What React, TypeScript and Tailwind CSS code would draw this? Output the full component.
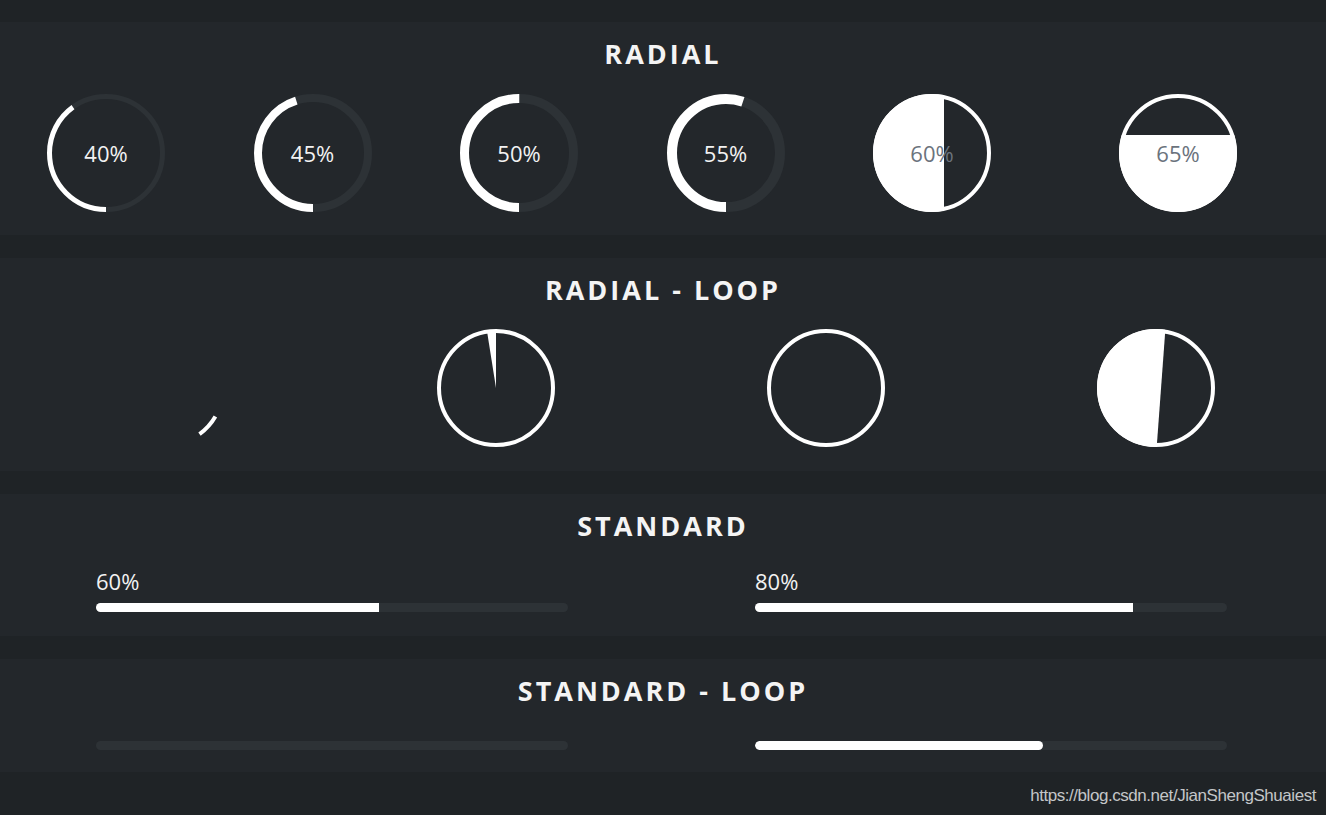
import React from "react";

function Arc({ p, sw, label }: { p: number; sw: number; label: string }) {
  const r = 59 - sw / 2;
  const c = 2 * Math.PI * r;
  return (
    <div className="relative w-[118px] h-[118px] shrink-0">
      <svg width="118" height="118" viewBox="0 0 118 118" className="block">
        <circle cx="59" cy="59" r={r} fill="none" stroke="#2d3236" strokeWidth={sw} />
        <circle
          cx="59"
          cy="59"
          r={r}
          fill="none"
          stroke="#ffffff"
          strokeWidth={sw}
          strokeDasharray={`${p * c} ${c}`}
          transform="rotate(90 59 59)"
        />
      </svg>
      <div className="absolute inset-0 flex items-center justify-center text-[22px] leading-[28px] text-[#f2f2f2] pb-[1px]">
        {label}
      </div>
    </div>
  );
}

function Fill({ id, kind, label }: { id: string; kind: "h" | "v"; label: string }) {
  return (
    <div className="relative w-[118px] h-[118px] shrink-0">
      <svg width="118" height="118" viewBox="0 0 118 118" className="block">
        <defs>
          <clipPath id={id}>
            <circle cx="59" cy="59" r="59" />
          </clipPath>
        </defs>
        <g clipPath={`url(#${id})`}>
          {kind === "h" ? (
            <rect x="0" y="0" width="71" height="118" fill="#ffffff" />
          ) : (
            <rect x="0" y="41" width="118" height="77" fill="#ffffff" />
          )}
        </g>
        <circle cx="59" cy="59" r="57" fill="none" stroke="#ffffff" strokeWidth="4" />
      </svg>
      <div className="absolute inset-0 flex items-center justify-center text-[22px] leading-[28px] text-[#6b737d] pb-[1px]">
        {label}
      </div>
    </div>
  );
}

function Title({ children }: { children: React.ReactNode }) {
  return (
    <div className="pt-[14px] h-[50px] text-center text-[27px] leading-[36px] font-bold tracking-[3px] text-[#f4f4f4]">
      {children}
    </div>
  );
}

function Bar({ fill, label, roundFill }: { fill: number; label?: string; roundFill?: boolean }) {
  return (
    <div className="w-[472px] shrink-0">
      {label && <div className="text-[22px] leading-[28px] text-[#f2f2f2] mb-2">{label}</div>}
      <div className="h-[9px] w-full rounded-full bg-[#2d3236] overflow-hidden">
        <div
          className={roundFill ? "h-full bg-white rounded-full" : "h-full bg-white"}
          style={{ width: `${fill}%` }}
        />
      </div>
    </div>
  );
}

export default function App() {
  return (
    <div
      className="relative min-h-[815px] w-full bg-[#1f2326] pt-[22px]"
      style={{ fontFamily: '"Open Sans", "Noto Sans", sans-serif' }}
    >
      {/* RADIAL */}
      <section className="bg-[#23272b] h-[213px]">
        <Title>RADIAL</Title>
        <div className="flex items-center pl-[47px] gap-[88.5px] mt-[22px]">
          <Arc p={0.4} sw={5} label="40%" />
          <Arc p={0.45} sw={8} label="45%" />
          <Arc p={0.5} sw={9} label="50%" />
          <Arc p={0.55} sw={10} label="55%" />
          <Fill id="c60" kind="h" label="60%" />
          <div className="ml-[39.5px]">
            <Fill id="c65" kind="v" label="65%" />
          </div>
        </div>
      </section>

      {/* RADIAL - LOOP */}
      <section className="bg-[#23272b] h-[213px] mt-[23px]">
        <Title>RADIAL - LOOP</Title>
        <div className="flex items-center pl-[107px] gap-[212px] mt-[21px]">
          <svg width="118" height="118" viewBox="0 0 118 118" className="block shrink-0">
            <path d="M108.4 87.5 A57 57 0 0 1 92.5 105.1" fill="none" stroke="#ffffff" strokeWidth="4" />
          </svg>
          <svg width="118" height="118" viewBox="0 0 118 118" className="block shrink-0">
            <circle cx="59" cy="59" r="57" fill="none" stroke="#ffffff" strokeWidth="4" />
            <path d="M59 59 L59 2 A57 57 0 0 0 50.1 2.7 Z" fill="#ffffff" />
          </svg>
          <svg width="118" height="118" viewBox="0 0 118 118" className="block shrink-0">
            <circle cx="59" cy="59" r="57" fill="none" stroke="#ffffff" strokeWidth="4" />
          </svg>
          <svg width="118" height="118" viewBox="0 0 118 118" className="block shrink-0">
            <defs>
              <clipPath id="loopc">
                <circle cx="59" cy="59" r="59" />
              </clipPath>
            </defs>
            <polygon points="0,0 68.4,0 59.7,118 0,118" fill="#ffffff" clipPath="url(#loopc)" />
            <circle cx="59" cy="59" r="57" fill="none" stroke="#ffffff" strokeWidth="4" />
          </svg>
        </div>
      </section>

      {/* STANDARD */}
      <section className="bg-[#23272b] h-[142px] mt-[23px]">
        <Title>STANDARD</Title>
        <div className="flex pl-[96px] gap-[187px] mt-[23px]">
          <Bar fill={60} label="60%" />
          <Bar fill={80} label="80%" />
        </div>
      </section>

      {/* STANDARD - LOOP */}
      <section className="bg-[#23272b] h-[113px] mt-[23px]">
        <Title>STANDARD - LOOP</Title>
        <div className="flex pl-[96px] gap-[187px] mt-[32px]">
          <Bar fill={0} />
          <Bar fill={61} roundFill />
        </div>
      </section>

      <div
        className="absolute right-[10px] top-[786px] text-[17px] leading-[20px] tracking-[-0.45px] text-[#c4c6c8]"
        style={{ fontFamily: '"Liberation Sans", Arial, sans-serif' }}
      >
        https://blog.csdn.net/JianShengShuaiest
      </div>
    </div>
  );
}
